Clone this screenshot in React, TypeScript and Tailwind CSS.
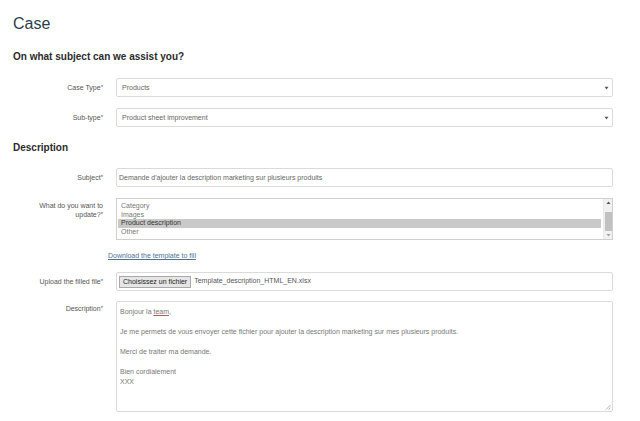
import React from "react";

// fila de formulario: etiqueta a la derecha y el campo a continuacion
function Row({
  label,
  children,
  top = false,
  className = "",
}: {
  label: React.ReactNode;
  children: React.ReactNode;
  top?: boolean;
  className?: string;
}) {
  return (
    <div className={`flex ${top ? "items-start" : "items-center"} ${className}`}>
      <div className={`w-[90px] shrink-0 text-right text-[7px] leading-[9px] text-[#555] ${top ? "pt-[3px]" : ""}`}>
        {label}
      </div>
      <div className="ml-[13px] w-[497px]">{children}</div>
    </div>
  );
}

function Req() {
  return <span className="relative -top-[1px] text-[6px]">*</span>;
}

function Arrow() {
  return (
    <svg width="5" height="4" viewBox="0 0 5 4" className="absolute right-[3px] top-[7px]">
      <path d="M0.5 0.8 L4.5 0.8 L2.5 3.4 Z" fill="#555" />
    </svg>
  );
}

function Select({ value }: { value: string }) {
  return (
    <div className="relative flex h-[19px] items-center rounded-[2px] border border-[#dadada] bg-white pl-[5px] pt-[1px] text-[7px] text-[#666]">
      {value}
      <Arrow />
    </div>
  );
}

export default function App() {
  const options = ["Brand", "Category", "Images", "Product description", "Other"];
  return (
    <div className="h-[421px] w-[640px] overflow-hidden bg-white pl-[13px] font-['Liberation_Sans',Arial,sans-serif]">
      <h1 className="mt-[16px] text-[16px] leading-[16px] text-[#2c3e50]">Case</h1>
      <h2 className="mt-[20px] text-[10px] font-bold leading-[10px] text-[#2b2b2b]">
        On what subject can we assist you?
      </h2>

      <Row label={<>Case Type<Req /></>} className="mt-[16px]">
        <Select value="Products" />
      </Row>
      <Row label={<>Sub-type<Req /></>} className="mt-[11px]">
        <Select value="Product sheet improvement" />
      </Row>

      <h2 className="mt-[16px] text-[10px] font-bold leading-[10px] text-[#2b2b2b]">Description</h2>

      <Row label={<>Subject<Req /></>} className="mt-[15px]">
        <div className="flex h-[19px] items-center rounded-[2px] border border-[#dadada] bg-white pl-[2px] pt-[1px] text-[7px] text-[#666]">
          Demande d'ajouter la description marketing sur plusieurs produits
        </div>
      </Row>

      <Row label={<>What do you want to<br />update?<Req /></>} top className="mt-[11px]">
        <div className="flex h-[42px] overflow-hidden border border-[#cfcfcf] bg-white">
          <div className="flex-1 overflow-hidden pl-[1px] pr-[2px]">
            <div className="-mt-[5.7px]">
              {options.map((o) => (
                <div
                  key={o}
                  className={`h-[8.7px] pl-[3px] text-[7px] leading-[8.7px] ${
                    o === "Product description" ? "bg-[#c9c9c9] text-[#333]" : "text-[#777]"
                  }`}
                >
                  {o}
                </div>
              ))}
            </div>
          </div>
          {/* barra de desplazamiento dibujada */}
          <div className="flex w-[9px] flex-col items-center border-l border-[#e8e8e8] bg-[#f1f1f1]">
            <svg width="5" height="9" viewBox="0 0 5 9">
              <path d="M0.5 5 L4.5 5 L2.5 2.5 Z" fill="#505050" />
            </svg>
            <div className="mt-[4px] h-[19px] w-[7px] bg-[#c1c1c1]" />
            <div className="flex-1" />
            <svg width="5" height="8" viewBox="0 0 5 8">
              <path d="M0.5 3 L4.5 3 L2.5 5.5 Z" fill="#a0a0a0" />
            </svg>
          </div>
        </div>
      </Row>

      <div className="mt-[11px] pl-[95px] text-[7px] leading-[10px] text-[#4f7191] underline">
        Download the template to fill
      </div>

      <Row label={<>Upload the filled file<Req /></>} className="mt-[11px]">
        <div className="flex h-[19px] items-center rounded-[2px] border border-[#dadada] bg-white pl-[2px] text-[7px]">
          <span className="border border-[#a9a9a9] bg-[#e6e6e6] px-[3px] leading-[10px] text-[#222]">
            Choisissez un fichier
          </span>
          <span className="ml-[3px] text-[#555]">Template_description_HTML_EN.xlsx</span>
        </div>
      </Row>

      <Row label={<>Description<Req /></>} top className="mt-[10px]">
        <div className="relative h-[111px] rounded-[2px] border border-[#dadada] bg-white pl-[3px] pt-[5px] text-[7px] leading-[10px] text-[#777]">
          <div>
            Bonjour la <span className="underline decoration-[#b06060]">team</span>,
          </div>
          <div>&nbsp;</div>
          <div>Je me permets de vous envoyer cette fichier pour ajouter la description marketing sur mes plusieurs produits.</div>
          <div>&nbsp;</div>
          <div>Merci de traiter ma demande.</div>
          <div>&nbsp;</div>
          <div>Bien cordialement</div>
          <div>XXX</div>
          <svg width="6" height="6" viewBox="0 0 6 6" className="absolute bottom-[1px] right-[1px]">
            <path d="M5.5 1 L1 5.5 M5.5 3.5 L3.5 5.5" stroke="#999" strokeWidth="0.8" />
          </svg>
        </div>
      </Row>
    </div>
  );
}
